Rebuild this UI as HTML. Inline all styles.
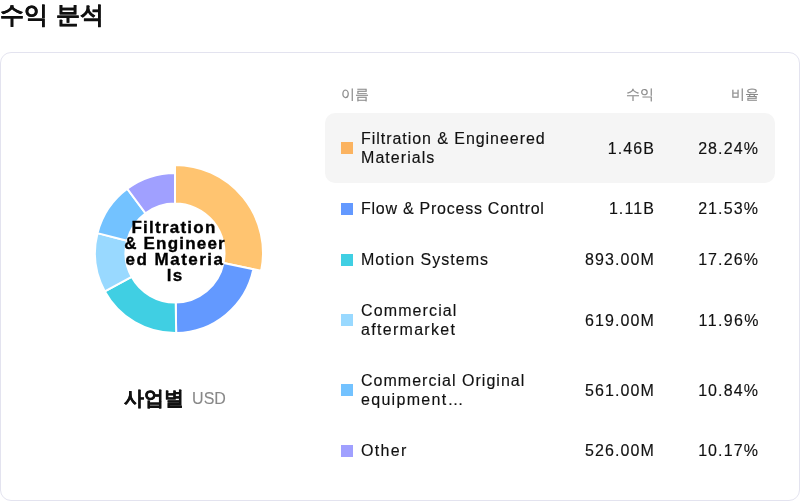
<!DOCTYPE html>
<html><head><meta charset="utf-8">
<style>
*{box-sizing:border-box;margin:0;padding:0}
html,body{width:800px;height:501px;overflow:hidden;background:#fff}
body{font-family:"Liberation Sans",sans-serif;color:#111;position:relative}
.layer{position:absolute;left:0;top:0;width:800px;height:501px;will-change:transform}
.title{position:absolute;left:0;top:0;font-size:24px;font-weight:bold;line-height:30px;white-space:nowrap;word-spacing:1.2px;-webkit-text-stroke:0.15px #111}
.card{position:absolute;left:0;top:52px;width:800px;height:449px;border:1px solid #e3e3ef;border-radius:11px;background:#fff}
svg.donut{position:absolute;left:0;top:0}
.center{position:absolute;left:75px;top:220px;width:200px;text-align:center;font-weight:bold;font-size:17px;line-height:16px;-webkit-text-stroke:0.35px #000;letter-spacing:1.2px;color:#000}
.caption{position:absolute;left:0;top:385px;width:350px;text-align:center;white-space:nowrap}
.caption b{font-size:20px;font-weight:bold;color:#111;-webkit-text-stroke:0.3px #111}
.caption span{font-size:16px;color:#888;-webkit-text-stroke:0.1px #888;margin-left:8px;position:relative;top:-1px}
.th{position:absolute;top:85px;font-size:14px;line-height:18px;color:#888;-webkit-text-stroke:0.15px #888;white-space:nowrap}
.hl{position:absolute;left:325px;top:113px;width:450px;height:70px;background:#f5f5f5;border-radius:10px}
.sq{position:absolute;left:341px;width:12px;height:12px}
.nm{position:absolute;left:361px;font-size:16px;line-height:19px;-webkit-text-stroke:0.15px #111;letter-spacing:0.72px;white-space:nowrap}
.num{position:absolute;font-size:16px;line-height:19px;-webkit-text-stroke:0.15px #111;letter-spacing:1.1px;white-space:nowrap;text-align:right}
.c1{right:145px}
.c2{right:41px}
</style></head><body><div class="layer">
<div class="title">수익 분석</div>
<div class="card"></div>
<svg class="donut" width="350" height="501" viewBox="0 0 350 501">
<path d="M175.00,165.00A88,88 0 0 1 261.18,270.79L223.48,263.01A49.5,49.5 0 0 0 175.00,203.50Z" fill="#FFC470" stroke="#fff" stroke-width="2"/>
<path d="M253.35,269.17A80,80 0 0 1 176.16,332.99L175.72,302.49A49.5,49.5 0 0 0 223.48,263.01Z" fill="#6399FF" stroke="#fff" stroke-width="2"/>
<path d="M176.16,332.99A80,80 0 0 1 104.82,291.41L131.58,276.77A49.5,49.5 0 0 0 175.72,302.49Z" fill="#40CFE3" stroke="#fff" stroke-width="2"/>
<path d="M104.82,291.41A80,80 0 0 1 97.50,233.15L127.05,240.72A49.5,49.5 0 0 0 131.58,276.77Z" fill="#99D9FF" stroke="#fff" stroke-width="2"/>
<path d="M97.50,233.15A80,80 0 0 1 127.29,188.78L145.48,213.27A49.5,49.5 0 0 0 127.05,240.72Z" fill="#73C2FF" stroke="#fff" stroke-width="2"/>
<path d="M127.29,188.78A80,80 0 0 1 175.00,173.00L175.00,203.50A49.5,49.5 0 0 0 145.48,213.27Z" fill="#A0A0FF" stroke="#fff" stroke-width="2"/>

</svg>
<div class="center"><span style="letter-spacing:1.25px;margin-left:-2px">Filtration</span><br>&amp; Engineer<br><span style="letter-spacing:1.5px">ed Materia</span><br>ls</div>
<div class="caption"><b>사업별</b><span>USD</span></div>
<div class="th" style="left:341px">이름</div>
<div class="th" style="right:146px">수익</div>
<div class="th" style="right:41px">비율</div>
<div class="hl"></div>

<div class="sq" style="top:142px;background:#FBB360"></div>
<div class="nm" style="top:129px"><span style="letter-spacing:0.95px">Filtration &amp; Engineered</span><br><span style="letter-spacing:1.05px">Materials</span></div>
<div class="num c1" style="top:139px">1.46B</div>
<div class="num c2" style="top:139px">28.24%</div>

<div class="sq" style="top:203px;background:#6399FF"></div>
<div class="nm" style="top:199px;letter-spacing:0.75px">Flow &amp; Process Control</div>
<div class="num c1" style="top:199px">1.11B</div>
<div class="num c2" style="top:199px">21.53%</div>

<div class="sq" style="top:254px;background:#40CFE3"></div>
<div class="nm" style="top:250px"><span style="letter-spacing:1.02px">Motion Systems</span></div>
<div class="num c1" style="top:250px">893.00M</div>
<div class="num c2" style="top:250px">17.26%</div>

<div class="sq" style="top:314px;background:#99D9FF"></div>
<div class="nm" style="top:301px"><span style="letter-spacing:1.12px">Commercial</span><br><span style="letter-spacing:1.3px">aftermarket</span></div>
<div class="num c1" style="top:311px">619.00M</div>
<div class="num c2" style="top:311px;letter-spacing:1.4px;right:40px">11.96%</div>

<div class="sq" style="top:384px;background:#73C2FF"></div>
<div class="nm" style="top:371px"><span style="letter-spacing:1.02px">Commercial Original</span><br><span style="letter-spacing:1.3px">equipment…</span></div>
<div class="num c1" style="top:381px">561.00M</div>
<div class="num c2" style="top:381px">10.84%</div>

<div class="sq" style="top:445px;background:#A0A0FF"></div>
<div class="nm" style="top:441px"><span style="letter-spacing:1.3px">Other</span></div>
<div class="num c1" style="top:441px">526.00M</div>
<div class="num c2" style="top:441px">10.17%</div>
</div></body></html>
